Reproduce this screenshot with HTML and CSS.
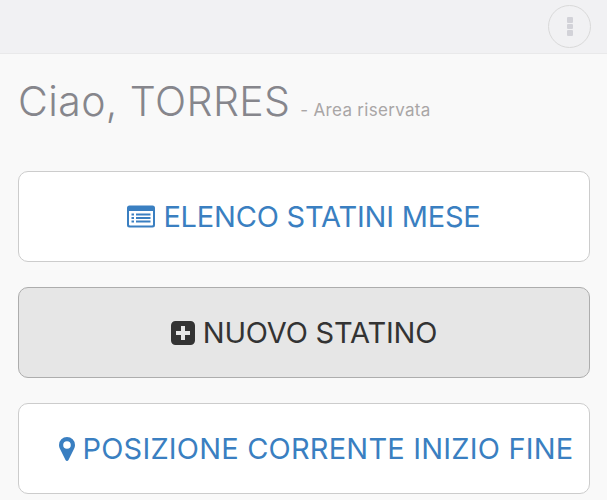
FILE: index.html
```html
<!DOCTYPE html>
<html lang="it">
  <head>
    <meta charset="UTF-8" />
    <meta name="viewport" content="width=device-width, initial-scale=1.0" />
    <title>Area riservata</title>
    <link rel="stylesheet" href="styles.css">
  </head>
  <body>
    <!-- Top bar -->
    <header class="topbar">
      <button class="menu-btn" type="button" aria-label="Menu">
        <span class="dot"></span>
        <span class="dot"></span>
        <span class="dot"></span>
      </button>
    </header>

    <main class="content">
      <h1 class="title">Ciao, TORRES <small class="subtitle">- Area riservata</small></h1>

      <a class="action" href="#">
        <svg class="icon icon-list" viewBox="0 0 28 22" aria-hidden="true">
          <path fill="currentColor" fill-rule="evenodd" d="M2.500 0h23A2.500 2.500 0 0 1 28 2.500v17a2.500 2.500 0 0 1-2.500 2.500h-23A2.500 2.500 0 0 1 0 19.500v-17A2.500 2.500 0 0 1 2.500 0zM2 5.500v13.500a1 1 0 0 0 1 1h22a1 1 0 0 0 1-1V5.500z"/>
          <path fill="currentColor" d="M4.500 8h2.500v2h-2.500zM9 8h14.500v2H9zM4.500 11.500h2.500v2h-2.500zM9 11.500h14.500v2H9zM4.500 15h2.500v2h-2.500zM9 15h14.500v2H9z"/>
        </svg>
        ELENCO STATINI MESE
      </a>

      <a class="action action-active" href="#">
        <svg class="icon icon-plus" viewBox="0 0 24 24" aria-hidden="true">
          <path fill="currentColor" fill-rule="evenodd" d="M4.500 0h15A4.500 4.500 0 0 1 24 4.500v15a4.500 4.500 0 0 1-4.500 4.500h-15A4.500 4.500 0 0 1 0 19.500v-15A4.500 4.500 0 0 1 4.500 0zM10 5v5H5v4h5v5h4v-5h5v-4h-5V5z"/>
        </svg>
        NUOVO STATINO
      </a>

      <a class="action action-shift" href="#">
        <svg class="icon icon-pin" viewBox="0 0 16 24" aria-hidden="true">
          <path fill="currentColor" fill-rule="evenodd" d="M8 0a8 8 0 0 1 8 8c0 1.900-.6 3.100-1.300 4.500L9.500 23a1.700 1.700 0 0 1-3 0L1.300 12.500C.6 11.100 0 9.900 0 8a8 8 0 0 1 8-8zm0 4.200a3.800 3.800 0 1 0 0 7.600 3.800 3.800 0 0 0 0-7.600z"/>
        </svg>
        POSIZIONE CORRENTE INIZIO FINE
      </a>
    </main>
  </body>
</html>
```

FILE: styles.css
```css
html {
  overflow: hidden;
}
body {
  margin: 0;
  background: #f9f9f9;
  font-family: Inter, "Open Sans", sans-serif;
}
.topbar {
  display: flex;
  justify-content: flex-end;
  align-items: flex-start;
  height: 54px;
  padding: 5px 16px 0 0;
  box-sizing: border-box;
  background: #f1f1f3;
  border-bottom: 1px solid #e9e9ea;
}
.menu-btn {
  display: flex;
  flex-direction: column;
  align-items: center;
  justify-content: center;
  gap: 1px;
  width: 43px;
  height: 43px;
  padding: 0;
  background: transparent;
  border: 1px solid #d9d9d9;
  border-radius: 50%;
}
.dot {
  width: 6px;
  height: 5.500px;
  background: #d2d2d8;
  border-radius: 1px;
}
.content {
  display: flex;
  flex-direction: column;
  gap: 25px;
  padding: 0 17px 0 18px;
}
.title {
  margin: 20px 0 18px;
  height: 54px;
  line-height: 54px;
  font-size: 41px;
  font-weight: 300;
  letter-spacing: 0.4px;
  color: #86868c;
  white-space: nowrap;
}
.subtitle {
  margin-left: -2px;
  font-size: 17px;
  font-weight: 400;
  letter-spacing: 0.3px;
  color: #a9a6a6;
}
.action {
  display: flex;
  align-items: center;
  justify-content: center;
  gap: 8px;
  height: 91px;
  box-sizing: border-box;
  background: #fff;
  border: 1px solid #ccc;
  border-radius: 10px;
  color: #3a7fc1;
  font-size: 29px;
  font-weight: 430;
  letter-spacing: -0.2px;
  text-decoration: none;
  white-space: nowrap;
}
.action-active {
  background: #e6e6e6;
  border-color: #adadad;
  color: #333;
}
.action-shift {
  padding-left: 24px;
  letter-spacing: 0.2px;
}
.icon {
  flex: none;
}
.icon-list {
  width: 28px;
  height: 23px;
}
.icon-plus {
  width: 24px;
  height: 24px;
}
.icon-pin {
  width: 16px;
  height: 24px;
}
```
